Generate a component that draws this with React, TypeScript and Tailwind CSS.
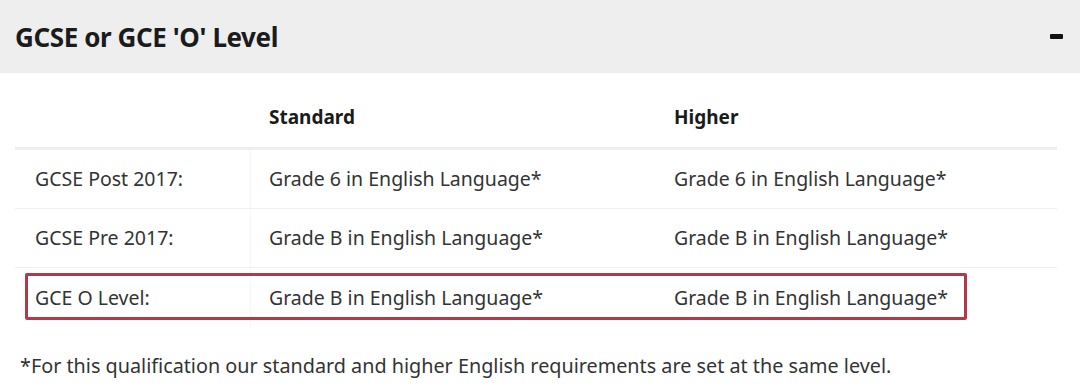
import React from "react";

const rows = [
  { label: "GCSE Post 2017:", std: "Grade 6 in English Language*", high: "Grade 6 in English Language*" },
  { label: "GCSE Pre 2017:", std: "Grade B in English Language*", high: "Grade B in English Language*" },
  { label: "GCE O Level:", std: "Grade B in English Language*", high: "Grade B in English Language*" },
];

export default function App() {
  return (
    <div
      className="relative w-[1080px] h-[386px] overflow-hidden bg-white text-[#333333]"
      style={{ fontFamily: '"Noto Sans", "Open Sans", Arial, sans-serif' }}
    >
      <div className="flex h-[73px] items-center justify-between bg-[#eeeeee] pl-[15px] pr-[17px]">
        <h2 className="text-[26px] font-bold leading-none tracking-[-0.4px] text-[#1b1b1b]">GCSE or GCE 'O' Level</h2>
        <div className="h-[5px] w-[13px] rounded-[1px] bg-[#111111]" />
      </div>

      <div className="px-[15px] pr-[23px]">
        <div className="flex h-[77px] items-start border-b-[3px] border-[#eeeeee] pt-[32px] text-[19px] font-bold leading-[24px] text-[#1b1b1b]">
          <div className="w-[235px]" />
          <div className="w-[405px] pl-[19px]">Standard</div>
          <div className="flex-1 pl-[19px]">Higher</div>
        </div>
        {rows.map((r, i) => (
          <div
            key={i}
            className={`flex h-[59px] items-center text-[19.5px] leading-[24px] ${i < rows.length - 1 ? "border-b border-[#efefef]" : ""}`}
          >
            <div className="w-[235px] pl-[20px]">{r.label}</div>
            <div className="flex h-full w-[405px] items-center border-l border-[#f6f6f6] pl-[18px]">{r.std}</div>
            <div className="flex-1 pl-[19px]">{r.high}</div>
          </div>
        ))}
      </div>

      <p className="mt-[27px] pl-[20px] text-[19.8px] leading-[24px] text-[#333333]">
        *For this qualification our standard and higher English requirements are set at the same level.
      </p>

      <div className="pointer-events-none absolute left-[25px] top-[273px] h-[47px] w-[942px] rounded-[2px] border-[3px] border-[#b13a4a]" />
    </div>
  );
}
